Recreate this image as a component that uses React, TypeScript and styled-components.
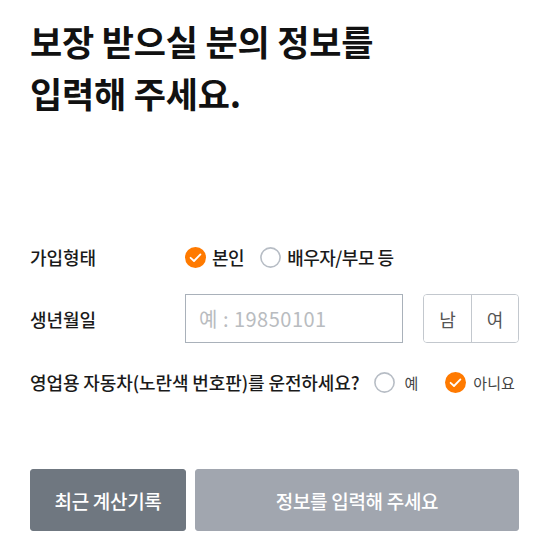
import React, { FunctionComponent, useState } from "react";
import styled, { createGlobalStyle } from "styled-components";

const GlobalStyle = createGlobalStyle`
  body {
    margin: 0;
    background: #fff;
    font-family: "Noto Sans CJK KR", "Noto Sans", sans-serif;
    color: #222;
  }
`;

const Page = styled.div`
  padding: 15px 35px 0 30px;
`;

const Title = styled.h1`
  margin: 0;
  font-size: 35px;
  line-height: 52px;
  font-weight: 700;
  color: #111;
  letter-spacing: -0.2px;
`;

const Form = styled.div`
  display: flex;
  flex-direction: column;
  margin-top: 116px;
`;

const Row = styled.div<{ top: number; height: number }>`
  display: flex;
  align-items: center;
  margin-top: ${({ top }) => top}px;
  height: ${({ height }) => height}px;
  white-space: nowrap;
`;

const Label = styled.div<{ wide?: boolean }>`
  width: ${({ wide }) => (wide ? "auto" : "155px")};
  margin-right: ${({ wide }) => (wide ? "14px" : "0")};
  font-size: 18px;
  font-weight: 500;
  color: #1a1a1a;
  letter-spacing: -0.1px;
  flex-shrink: 0;
`;

const Options = styled.div`
  display: flex;
  align-items: center;
  flex-shrink: 0;
`;

const Option = styled.label<{ light?: boolean; spacing: number; gap: number }>`
  display: flex;
  align-items: center;
  gap: ${({ gap }) => gap}px;
  margin-right: ${({ spacing }) => spacing}px;
  font-size: ${({ light }) => (light ? "15px" : "18px")};
  font-weight: ${({ light }) => (light ? 400 : 500)};
  letter-spacing: ${({ light }) => (light ? "0" : "-0.5px")};
  color: ${({ light }) => (light ? "#444" : "#1a1a1a")};
  cursor: pointer;
`;

const DateInput = styled.input`
  box-sizing: border-box;
  width: 218px;
  height: 49px;
  padding: 0 13px;
  border: 1px solid #a9b1ba;
  border-radius: 0;
  font-family: inherit;
  font-size: 20px;
  letter-spacing: 0.5px;
  color: #333;
  outline: none;
  &::placeholder {
    color: #b9bcc0;
  }
`;

const GenderGroup = styled.div`
  display: flex;
  box-sizing: border-box;
  height: 49px;
  margin-left: 20px;
  border: 1px solid #c3c8ce;
  border-radius: 4px;
  overflow: hidden;
`;

const GenderButton = styled.button<{ active: boolean }>`
  width: 47px;
  border: 0;
  background: ${({ active }) => (active ? "#fff4ea" : "#fff")};
  font-family: inherit;
  font-size: 18px;
  color: #555;
  cursor: pointer;
  & + & {
    border-left: 1px solid #c3c8ce;
  }
`;

const Buttons = styled.div`
  display: flex;
  gap: 9px;
  margin-top: 65px;
`;

const ActionButton = styled.button<{ grow?: boolean; tone: string }>`
  height: 62px;
  width: ${({ grow }) => (grow ? "auto" : "156px")};
  flex: ${({ grow }) => (grow ? 1 : "none")};
  border: 1px solid ${({ tone }) => tone};
  border-radius: 3px;
  background: ${({ tone }) => tone};
  color: #fff;
  font-family: inherit;
  font-size: 19px;
  font-weight: 500;
  letter-spacing: -0.3px;
`;

const RadioMark: FunctionComponent<{ checked: boolean }> = ({ checked }) =>
  checked ? (
    <svg width="21" height="21" viewBox="0 0 21 21">
      <circle cx="10.5" cy="10.5" r="10.5" fill="#ff7a00" />
      <path
        d="M5.6 10.8 L9 14 L15.4 7.4"
        fill="none"
        stroke="#fff"
        strokeWidth="1.8"
        strokeLinecap="round"
        strokeLinejoin="round"
      />
    </svg>
  ) : (
    <svg width="21" height="21" viewBox="0 0 21 21">
      <circle cx="10.5" cy="10.5" r="9.6" fill="#fff" stroke="#b7bdc5" strokeWidth="1.6" />
    </svg>
  );

const App: FunctionComponent = () => {
  const [joinType, setJoinType] = useState("self");
  const [business, setBusiness] = useState("no");
  const [gender, setGender] = useState("");

  return (
    <Page>
      <GlobalStyle />
      <Title>
        보장 받으실 분의 정보를
        <br />
        입력해 주세요.
      </Title>
      <Form>
        <Row top={0} height={44}>
          <Label>가입형태</Label>
          <Options>
            <Option gap={6} spacing={16} onClick={() => setJoinType("self")}>
              <RadioMark checked={joinType === "self"} />
              본인
            </Option>
            <Option gap={6} spacing={0} onClick={() => setJoinType("family")}>
              <RadioMark checked={joinType === "family"} />
              배우자/부모 등
            </Option>
          </Options>
        </Row>
        <Row top={15} height={49}>
          <Label>생년월일</Label>
          <DateInput placeholder="예 : 19850101" />
          <GenderGroup>
            <GenderButton active={gender === "m"} onClick={() => setGender("m")}>
              남
            </GenderButton>
            <GenderButton active={gender === "f"} onClick={() => setGender("f")}>
              여
            </GenderButton>
          </GenderGroup>
        </Row>
        <Row top={17} height={44}>
          <Label wide>영업용 자동차(노란색 번호판)를 운전하세요?</Label>
          <Options>
            <Option light gap={10} spacing={27} onClick={() => setBusiness("yes")}>
              <RadioMark checked={business === "yes"} />예
            </Option>
            <Option light gap={7} spacing={0} onClick={() => setBusiness("no")}>
              <RadioMark checked={business === "no"} />
              아니요
            </Option>
          </Options>
        </Row>
      </Form>
      <Buttons>
        <ActionButton tone="#6f7780">최근 계산기록</ActionButton>
        <ActionButton grow tone="#a1a6af" disabled>
          정보를 입력해 주세요
        </ActionButton>
      </Buttons>
    </Page>
  );
};

export default App;
